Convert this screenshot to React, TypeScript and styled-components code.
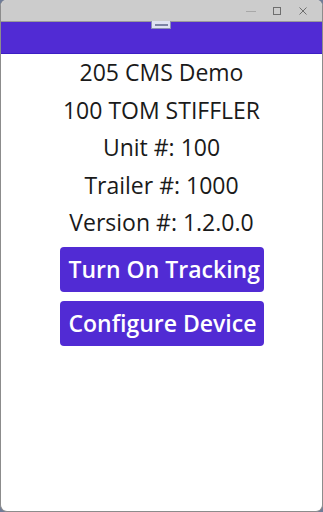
import styled, { createGlobalStyle } from 'styled-components';

const GlobalStyle = createGlobalStyle`
  html, body {
    margin: 0;
    padding: 0;
    background: #6f7c98;
  }
  body {
    font-family: "Open Sans", "Noto Sans", sans-serif;
  }
`;

const Window = styled.div`
  position: relative;
  box-sizing: border-box;
  width: 323px;
  height: 512px;
  background: #ffffff;
  border: 1px solid #8c8c8c;
  border-top: none;
  border-radius: 6px 6px 7px 7px;
  overflow: hidden;
  display: flex;
  flex-direction: column;
`;

const TitleBar = styled.div`
  height: 21px;
  background: #cccccc;
  border-bottom: 1px solid #9a9a9a;
  display: flex;
  justify-content: flex-end;
  align-items: center;
  flex-shrink: 0;
`;

const Caption = styled.div<{ $last?: boolean }>`
  width: 26px;
  height: 21px;
  margin-right: ${(p) => (p.$last ? '6px' : '0')};
  display: flex;
  align-items: center;
  justify-content: center;
`;

const NavBar = styled.div`
  height: 31px;
  background: #512bd4;
  border-bottom: 1px solid #3c1ec4;
  flex-shrink: 0;
`;

const Handle = styled.div`
  position: absolute;
  left: 150px;
  top: 21px;
  width: 20px;
  height: 8px;
  box-sizing: border-box;
  background: #dfe2f2;
  border: 1px solid #8a90b4;
  border-top: none;
  border-radius: 0 0 1px 1px;
  display: flex;
  align-items: center;
  justify-content: center;

  &::after {
    content: '';
    width: 13px;
    height: 2px;
    background: #7c82a4;
  }
`;

const Content = styled.div`
  display: flex;
  flex-direction: column;
  align-items: center;
  gap: 6.5px;
  padding-top: 3px;
`;

const Label = styled.div`
  font-size: 23px;
  line-height: 31px;
  color: #1a1a1a;
  white-space: nowrap;
`;

const ButtonGroup = styled.div`
  display: flex;
  flex-direction: column;
  gap: 9px;
  margin-top: 2.5px;
`;

const ActionButton = styled.button`
  box-sizing: border-box;
  width: 204px;
  height: 45px;
  padding: 0 0 1px 9px;
  border: none;
  border-radius: 4px;
  background: #512bd4;
  color: #ffffff;
  font-family: "Open Sans", "Noto Sans", sans-serif;
  font-weight: 600;
  font-size: 23px;
  text-align: left;
  white-space: nowrap;
  overflow: hidden;
`;

export default function App() {
  return (
    <>
      <GlobalStyle />
      <Window>
        <TitleBar>
          <Caption>
            <svg width="10" height="10" viewBox="0 0 10 10">
              <line x1="0" y1="5.5" x2="10" y2="5.5" stroke="#a8a8a8" strokeWidth="1" />
            </svg>
          </Caption>
          <Caption>
            <svg width="10" height="10" viewBox="0 0 10 10">
              <rect x="1.5" y="1.5" width="7" height="7" fill="none" stroke="#6e6e6e" strokeWidth="1" />
            </svg>
          </Caption>
          <Caption $last>
            <svg width="10" height="10" viewBox="0 0 10 10">
              <path d="M1.5 1.5 L8.5 8.5 M8.5 1.5 L1.5 8.5" stroke="#6e6e6e" strokeWidth="1" />
            </svg>
          </Caption>
        </TitleBar>
        <NavBar />
        <Handle />
        <Content>
          <Label>205 CMS Demo</Label>
          <Label>100 TOM STIFFLER</Label>
          <Label>Unit #: 100</Label>
          <Label>Trailer #: 1000</Label>
          <Label>Version #: 1.2.0.0</Label>
          <ButtonGroup>
            <ActionButton>Turn On Tracking</ActionButton>
            <ActionButton>Configure Device</ActionButton>
          </ButtonGroup>
        </Content>
      </Window>
    </>
  );
}
